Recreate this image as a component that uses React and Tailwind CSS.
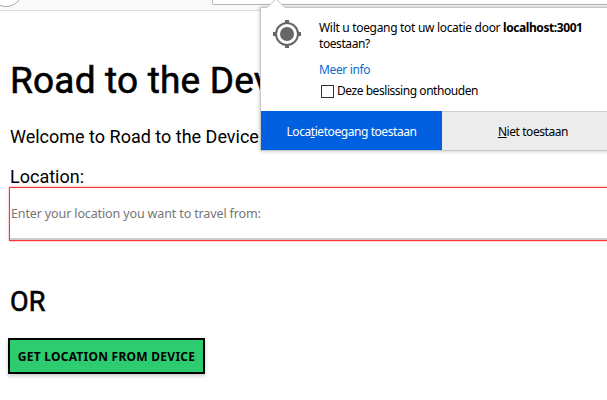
function LocateIcon() {
  return (
    <svg className="block h-7 w-7 shrink-0" viewBox="0 0 28 28" fill="none">
      <circle cx="14" cy="14" r="11" stroke="#666" strokeWidth="2" />
      <circle cx="14" cy="14" r="7" fill="#666" />
      <path d="M14 0v3M14 25v3M0 14h3M25 14h3" stroke="#666" strokeWidth="4" />
    </svg>
  );
}

function PermissionPopup() {
  return (
    <div className="absolute top-[7px] left-[260px] h-[144px] w-[365px] border border-[#c8c8c8] bg-white font-['Noto_Sans',sans-serif] text-[12px] leading-4 text-black shadow-[0_0_4px_rgba(0,0,0,0.25)]">
      <svg className="absolute -top-[9px] left-[5px] h-[10px] w-5" viewBox="0 0 20 10">
        <path d="M0 9.5 10 0l10 9.5V10H0z" fill="#fff" />
        <path d="M0 8.7h1L10 0l9 8.7h1" fill="none" stroke="#c8c8c8" />
      </svg>
      <div className="flex h-[102px] pt-3 pl-3">
        <LocateIcon />
        <div className="ml-[18px] whitespace-nowrap">
          <p className="tracking-[-0.31px]">
            Wilt u toegang tot uw locatie door <b className="tracking-[-0.42px]">localhost:3001</b>
          </p>
          <p className="tracking-[-0.42px]">toestaan?</p>
          <a className="mt-[10px] block tracking-[-0.35px] text-[#0a6cce]">Meer info</a>
          <label className="mt-[5px] flex items-center pl-[2px] tracking-[-0.45px]">
            <span className="mr-[3px] h-[13px] w-[13px] border border-[#333]" />
            Deze beslissing onthouden
          </label>
        </div>
      </div>
      <div className="flex h-10 pt-px tracking-[-0.43px]">
        <button className="w-[181px] shrink-0 bg-[#0060df] pt-[2px] text-white">
          Loca<u>t</u>ietoegang toestaan
        </button>
        <button className="w-[182px] shrink-0 border-t border-[#d0d0d0] bg-[#ececec] pt-px">
          <u>N</u>iet toestaan
        </button>
      </div>
    </div>
  );
}

export default function App() {
  return (
    <div className="relative h-[400px] w-[607px] overflow-hidden bg-white font-[Roboto,sans-serif] text-black">
      <header className="flex h-[11px] justify-between border-b border-[#dedede] bg-[#f9f9f9]">
        <div className="-mt-[27px] -ml-[11px] h-[34px] w-[34px] rounded-full border border-[#aaa] bg-white" />
        <div className="h-[5px] w-[395px] rounded-bl-[2px] border-b border-l border-[#b8b8b8] bg-white" />
      </header>
      <main className="whitespace-nowrap">
        <h1 className="mt-[47px] ml-[10px] text-[37px] leading-[46px] font-normal tracking-[0.2px] [-webkit-text-stroke:0.6px_black]">Road to the Device</h1>
        <p className="mt-[21px] ml-[10px] text-[18px] leading-6">Welcome to Road to the Device</p>
        <label className="mt-4 ml-[10px] block text-[18px] leading-6">Location:</label>
        <input
          placeholder="Enter your location you want to travel from:"
          className="-mt-px ml-[10px] block h-[52px] w-[610px] border-b-2 border-[#ccc] px-px font-['Noto_Sans',sans-serif] text-[12.5px] tracking-[-0.13px] shadow-[0_0_0_1px_#f33,0_0_2px_1px_#f88] placeholder:text-[#757575]"
        />
        <h2 className="mt-[44px] ml-[10px] text-[27px] leading-9 font-normal tracking-[0.2px] [-webkit-text-stroke:0.6px_black]">OR</h2>
        <button className="mt-[18px] ml-2 block h-9 w-[197px] border-2 border-black bg-[#2ecc71] pt-px font-['Noto_Sans',sans-serif] text-[12px] font-bold tracking-[0.26px] shadow-[0_2px_4px_rgba(0,0,0,0.2)]">
          GET LOCATION FROM DEVICE
        </button>
      </main>
      <PermissionPopup />
    </div>
  );
}
